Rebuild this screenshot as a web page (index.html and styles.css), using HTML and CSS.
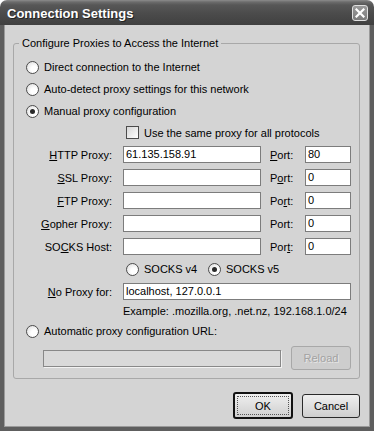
FILE: index.html
```html
<!DOCTYPE html>
<html lang="en">
<head>
  <meta charset="UTF-8">
  <title>Connection Settings</title>
  <meta name="viewport" content="width=device-width, initial-scale=1">
  <link rel="stylesheet" href="styles.css">
</head>
<body>
  <div class="window">
    <div class="titlebar">
      <span class="title">Connection Settings</span>
      <span class="close">
        <svg width="10" height="10" viewBox="0 0 10 10"><path d="M1.5 1.5 L8.5 8.5 M8.5 1.5 L1.5 8.5" stroke="#fff" stroke-width="2.2" stroke-linecap="square"/></svg>
      </span>
    </div>

    <div class="body">
      <fieldset class="group">
        <legend>Configure Proxies to Access the Internet</legend>

        <div class="opt"><span class="radio"></span>Direct connection to the Internet</div>
        <div class="opt"><span class="radio"></span>Auto-detect proxy settings for this network</div>
        <div class="opt"><span class="radio on"></span>Manual proxy configuration</div>

        <div class="check-row"><span class="check"></span>Use the same proxy for all protocols</div>

        <div class="proxy-row">
          <span class="lbl"><u>H</u>TTP Proxy:</span>
          <span class="field host">61.135.158.91</span>
          <span class="port-lbl"><u>P</u>ort:</span>
          <span class="field port">80</span>
        </div>
        <div class="proxy-row">
          <span class="lbl"><u>S</u>SL Proxy:</span>
          <span class="field host"></span>
          <span class="port-lbl">P<u>o</u>rt:</span>
          <span class="field port">0</span>
        </div>
        <div class="proxy-row">
          <span class="lbl"><u>F</u>TP Proxy:</span>
          <span class="field host"></span>
          <span class="port-lbl">Po<u>r</u>t:</span>
          <span class="field port">0</span>
        </div>
        <div class="proxy-row">
          <span class="lbl"><u>G</u>opher Proxy:</span>
          <span class="field host"></span>
          <span class="port-lbl">Port:</span>
          <span class="field port">0</span>
        </div>
        <div class="proxy-row">
          <span class="lbl">SO<u>C</u>KS Host:</span>
          <span class="field host"></span>
          <span class="port-lbl">Por<u>t</u>:</span>
          <span class="field port">0</span>
        </div>

        <div class="socks-row">
          <span class="sub-opt"><span class="radio"></span>SOCKS v4</span>
          <span class="sub-opt"><span class="radio on"></span>SOCKS v5</span>
        </div>

        <div class="proxy-row noproxy">
          <span class="lbl"><u>N</u>o Proxy for:</span>
          <span class="field wide">localhost, 127.0.0.1</span>
        </div>
        <div class="example">Example: .mozilla.org, .net.nz, 192.168.1.0/24</div>

        <div class="opt"><span class="radio"></span>Automatic proxy configuration URL:</div>

        <div class="url-row">
          <span class="field url"></span>
          <span class="btn reload">Reload</span>
        </div>
      </fieldset>

      <div class="buttons">
        <span class="btn ok"><span class="focus">OK</span></span>
        <span class="btn cancel">Cancel</span>
      </div>
    </div>
  </div>
</body>
</html>
```

FILE: styles.css
```css
body {
  margin: 0;
  font-family: "Liberation Sans", Arial, sans-serif;
  font-size: 11px;
  color: #000;
  background: #fff;
}
.window {
  width: 374px;
  height: 431px;
  display: flex;
  flex-direction: column;
}
.titlebar {
  height: 25px;
  box-sizing: border-box;
  padding: 2px 6px 0 7px;
  display: flex;
  align-items: center;
  justify-content: space-between;
  border-radius: 7px 7px 0 0;
  background: linear-gradient(#8c8c8c 0, #6c6c6c 2px, #575757 5px, #4b4b4b 55%, #404040 100%);
}
.title {
  color: #fff;
  font-size: 13px;
  font-weight: bold;
  text-shadow: 1px 1px 0 #222;
}
.close {
  width: 14px;
  height: 14px;
  margin-top: -1px;
  border: 1px solid #e0e0e0;
  border-radius: 3px;
  background: linear-gradient(#9a9a9a, #7c7c7c);
  display: flex;
  align-items: center;
  justify-content: center;
}
.body {
  flex: 1;
  background: #d4d4d4;
  border: 4px solid #5e5e5e;
  border-top: 0;
  padding: 12px 10px 0 9px;
  box-shadow: inset 1px 0 0 #9a9a9a, inset -1px -1px 0 #9a9a9a;
}
.group {
  margin: 0;
  padding: 6px 0 8px 0;
  min-width: 0;
  border: 1px solid #a8a8a8;
  border-radius: 3px;
}
.group legend {
  margin-left: 5px;
  padding: 0 3px;
  line-height: 13px;
}
.opt {
  display: flex;
  align-items: center;
  height: 22px;
  padding-left: 12px;
}
.radio {
  width: 13px;
  height: 13px;
  box-sizing: border-box;
  margin-right: 5px;
  border: 1px solid #4c4c4c;
  border-radius: 50%;
  background: radial-gradient(circle at 65% 65%, #fff 30%, #d8d8d8 100%);
  display: flex;
  align-items: center;
  justify-content: center;
  flex: none;
}
.radio.on::after {
  content: "";
  width: 5px;
  height: 5px;
  border-radius: 50%;
  background: #2a2a2a;
}
.check-row {
  display: flex;
  align-items: center;
  height: 21px;
  padding-left: 112px;
}
.check {
  width: 13px;
  height: 13px;
  box-sizing: border-box;
  margin-right: 5px;
  border: 1px solid #4c4c4c;
  background: linear-gradient(135deg, #d6d6d6, #fff);
}
.proxy-row {
  display: flex;
  align-items: center;
  height: 23px;
}
.lbl {
  width: 98px;
  text-align: right;
}
.field {
  height: 17px;
  box-sizing: border-box;
  border: 1px solid #7c7c7c;
  background: #fff;
  padding: 0 2px;
  line-height: 15px;
  font-size: 11px;
}
.host {
  width: 138px;
  margin-left: 11px;
}
.port-lbl {
  width: 35px;
  margin-left: 9px;
}
.port {
  width: 46px;
}
.wide {
  width: 228px;
  margin-left: 11px;
}
.socks-row {
  display: flex;
  align-items: center;
  height: 22px;
  padding-left: 112px;
}
.sub-opt {
  display: flex;
  align-items: center;
  width: 82px;
}
.example {
  height: 17px;
  line-height: 17px;
  padding-left: 109px;
}
.url-row {
  display: flex;
  align-items: center;
  height: 24px;
  margin-top: 4px;
  padding-left: 29px;
}
.url {
  width: 238px;
  background: #d9d9d9;
  border-color: #888;
  box-shadow: 1px 1px 0 #f2f2f2;
}
.btn {
  box-sizing: border-box;
  display: flex;
  align-items: center;
  justify-content: center;
  border-radius: 3px;
  background: linear-gradient(#efefef, #cfcfcf);
}
.reload {
  width: 60px;
  height: 24px;
  margin-left: 10px;
  border: 1px solid #a8a8a8;
  background: #cdcdcd;
  color: #a2a2a2;
  text-shadow: 1px 1px 0 #e6e6e6;
}
.buttons {
  display: flex;
  align-items: center;
  justify-content: flex-end;
  margin-top: 13px;
}
.ok {
  width: 60px;
  height: 27px;
  border: 2px solid #111;
  padding: 2px;
}
.ok .focus {
  flex: 1;
  align-self: stretch;
  display: flex;
  align-items: center;
  justify-content: center;
  border: 1px dotted #555;
}
.cancel {
  width: 58px;
  height: 24px;
  margin-left: 9px;
  border: 1px solid #2a2a2a;
}
```
